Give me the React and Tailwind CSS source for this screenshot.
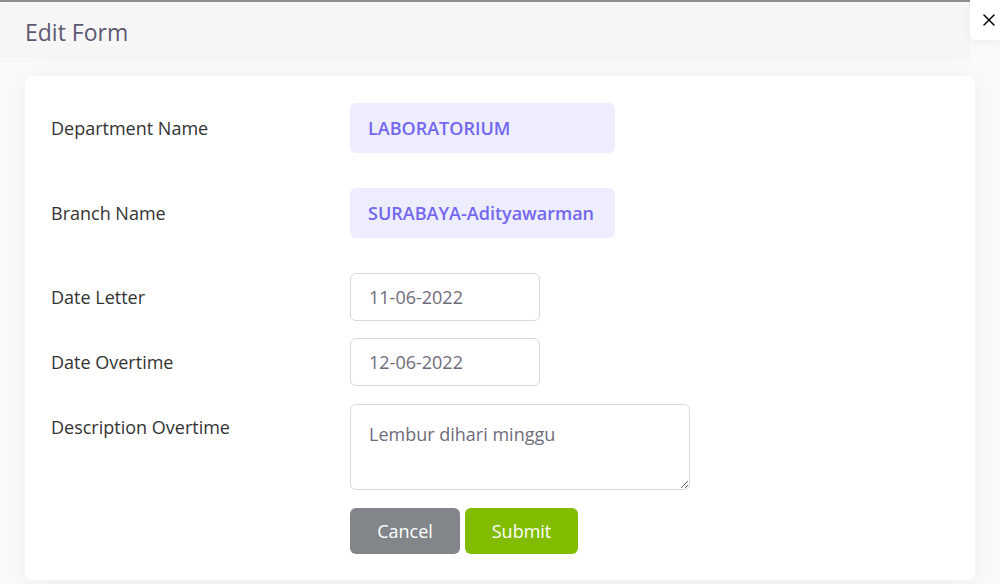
import { X } from 'lucide-react';

const Row = ({ label, top = false, children, className = '' }) => (
  <div className={`flex ${top ? 'items-start' : 'items-center'} ${className}`}>
    <div className={`w-[299px] shrink-0 text-[18px] text-[#333333] ${top ? 'pt-[10px]' : ''}`}>{label}</div>
    {children}
  </div>
);

const App = () => {
  return (
    <div
      className="relative h-[584px] w-[1000px] overflow-hidden bg-[#fafafa]"
      style={{ fontFamily: '"Open Sans", "Noto Sans", sans-serif' }}
    >
      <div className="h-[2px] w-[970px] bg-[#8d8d91]" />

      {/* Header */}
      <div className="flex h-[60px] w-[970px] items-center rounded-tl-[6px] bg-[#f6f6f6] pl-[25px]">
        <h2 className="text-[23px] text-[#5e5873]">Edit Form</h2>
      </div>

      {/* Close */}
      <button className="absolute right-0 top-0 flex h-[40px] w-[30px] items-center justify-start rounded-bl-[6px] bg-white pl-[9px] text-black shadow-[0_2px_8px_rgba(0,0,0,0.06)]">
        <X size={20} strokeWidth={1.8} />
      </button>

      {/* Card */}
      <div className="mx-[25px] mt-[14px] h-[504px] rounded-[6px] bg-white px-[26px] pt-[27px] shadow-[0_4px_24px_rgba(34,41,47,0.06)]">
        <Row label="Department Name">
          <div className="flex h-[50px] w-[265px] items-center rounded-[6px] bg-[#eeedfd] pl-[18px] text-[18px] font-semibold text-[#7367f0]">
            LABORATORIUM
          </div>
        </Row>
        <Row label="Branch Name" className="mt-[35px]">
          <div className="flex h-[50px] w-[265px] items-center rounded-[6px] bg-[#eeedfd] pl-[18px] text-[18px] font-semibold text-[#7367f0]">
            SURABAYA-Adityawarman
          </div>
        </Row>
        <Row label="Date Letter" className="mt-[35px]">
          <input
            readOnly
            value="11-06-2022"
            className="h-[48px] w-[190px] rounded-[6px] border border-[#d8d6de] bg-white pl-[18px] text-[18px] text-[#6e6b7b] outline-none"
          />
        </Row>
        <Row label="Date Overtime" className="mt-[17px]">
          <input
            readOnly
            value="12-06-2022"
            className="h-[48px] w-[190px] rounded-[6px] border border-[#d8d6de] bg-white pl-[18px] text-[18px] text-[#6e6b7b] outline-none"
          />
        </Row>
        <Row label="Description Overtime" top className="mt-[18px]">
          <textarea
            readOnly
            value="Lembur dihari minggu"
            className="h-[86px] w-[340px] rounded-[6px] border border-[#d8d6de] bg-white px-[18px] pt-[16px] text-[18px] leading-[26px] text-[#6e6b7b] outline-none"
          />
        </Row>
        <div className="ml-[299px] mt-[18px] flex gap-[5px]">
          <button className="h-[46px] w-[110px] rounded-[6px] bg-[#82868b] text-[18px] text-white">Cancel</button>
          <button className="h-[46px] w-[113px] rounded-[6px] bg-[#82bc00] text-[18px] text-white">Submit</button>
        </div>
      </div>
    </div>
  );
};

export default App;
